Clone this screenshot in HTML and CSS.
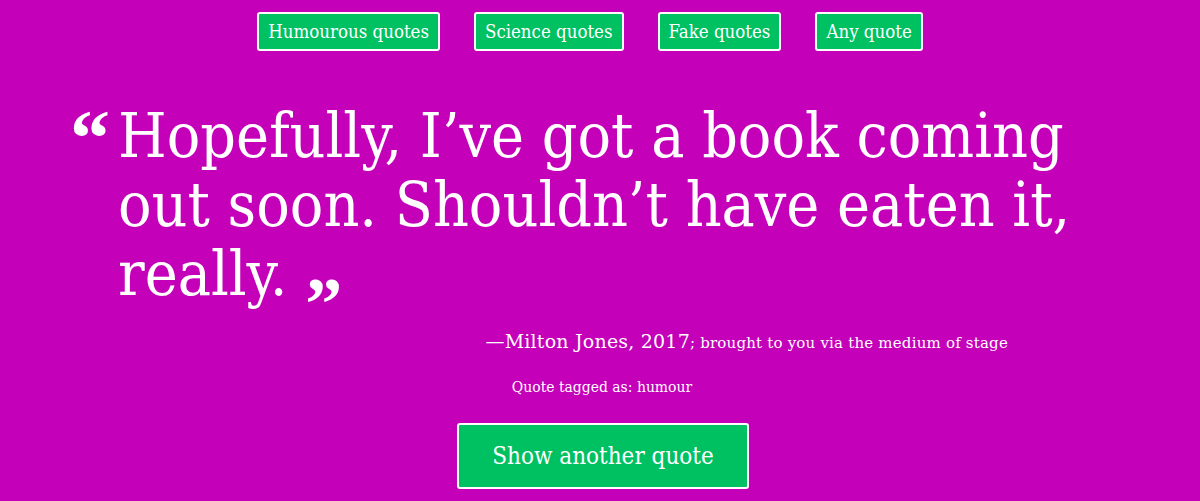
FILE: index.html
```html
<!DOCTYPE html>
<html lang="en">
<head>
<meta charset="utf-8">
<title>Quotes</title>
<link rel="stylesheet" href="styles.css">
</head>
<body>
<nav class="filters">
  <button class="btn">Humourous quotes</button>
  <button class="btn">Science quotes</button>
  <button class="btn">Fake quotes</button>
  <button class="btn">Any quote</button>
</nav>
<main class="quote-area">
  <blockquote class="quote">
    <span class="mark open">“</span>
    <p class="quote-text">Hopefully, I’ve got a book coming out soon. Shouldn’t have eaten it, really. <span class="mark close">”</span></p>
  </blockquote>
  <p class="attribution"><span class="author">—Milton Jones, 2017</span>; brought to you via the medium of stage</p>
  <p class="tags">Quote tagged as: humour</p>
  <div class="actions"><button class="btn big">Show another quote</button></div>
</main>
</body>
</html>
```

FILE: styles.css
```css
html, body {
  margin: 0;
  padding: 0;
  background: #c400b9;
  color: #fff;
  font-family: "DejaVu Serif", "Liberation Serif", serif;
}
.filters {
  display: flex;
  justify-content: center;
  gap: 34px;
  padding-top: 12px;
  padding-right: 20px;
}
.btn {
  background: #00c161;
  color: #fff;
  border: 2px solid #fff;
  border-radius: 3px;
  font-family: "DejaVu Serif Condensed", "DejaVu Serif", serif;
  font-size: 18.5px;
  height: 39px;
  padding: 0 9px;
  cursor: pointer;
}
.quote-area {
  display: flex;
  flex-direction: column;
}
.quote {
  display: flex;
  margin: 50px 0 0 70px;
  width: 1020px;
}
.mark {
  font-family: "Liberation Serif", serif;
  font-weight: bold;
  font-size: 80px;
}
.open {
  width: 48px;
  flex: none;
  line-height: 1;
  margin-top: -3px;
}
.close {
  font-size: 74px;
  line-height: 0;
  vertical-align: -34px;
}
.quote-text {
  margin: 0;
  font-family: "DejaVu Serif Condensed", "DejaVu Serif", serif;
  font-size: 62px;
  line-height: 69px;
}
.attribution {
  margin: 22px 0 0;
  align-self: flex-end;
  margin-right: 192px;
  font-size: 15px;
  letter-spacing: 0.2px;
}
.author {
  font-size: 19px;
}
.tags {
  margin: 26px 0 0;
  text-align: center;
  font-family: "DejaVu Serif Condensed", "DejaVu Serif", serif;
  font-size: 15.5px;
  padding-left: 4px;
}
.actions {
  display: flex;
  justify-content: center;
  margin-top: 27px;
  padding-left: 6px;
}
.btn.big {
  height: 66px;
  font-size: 24px;
  padding: 0 33px;
}
```
